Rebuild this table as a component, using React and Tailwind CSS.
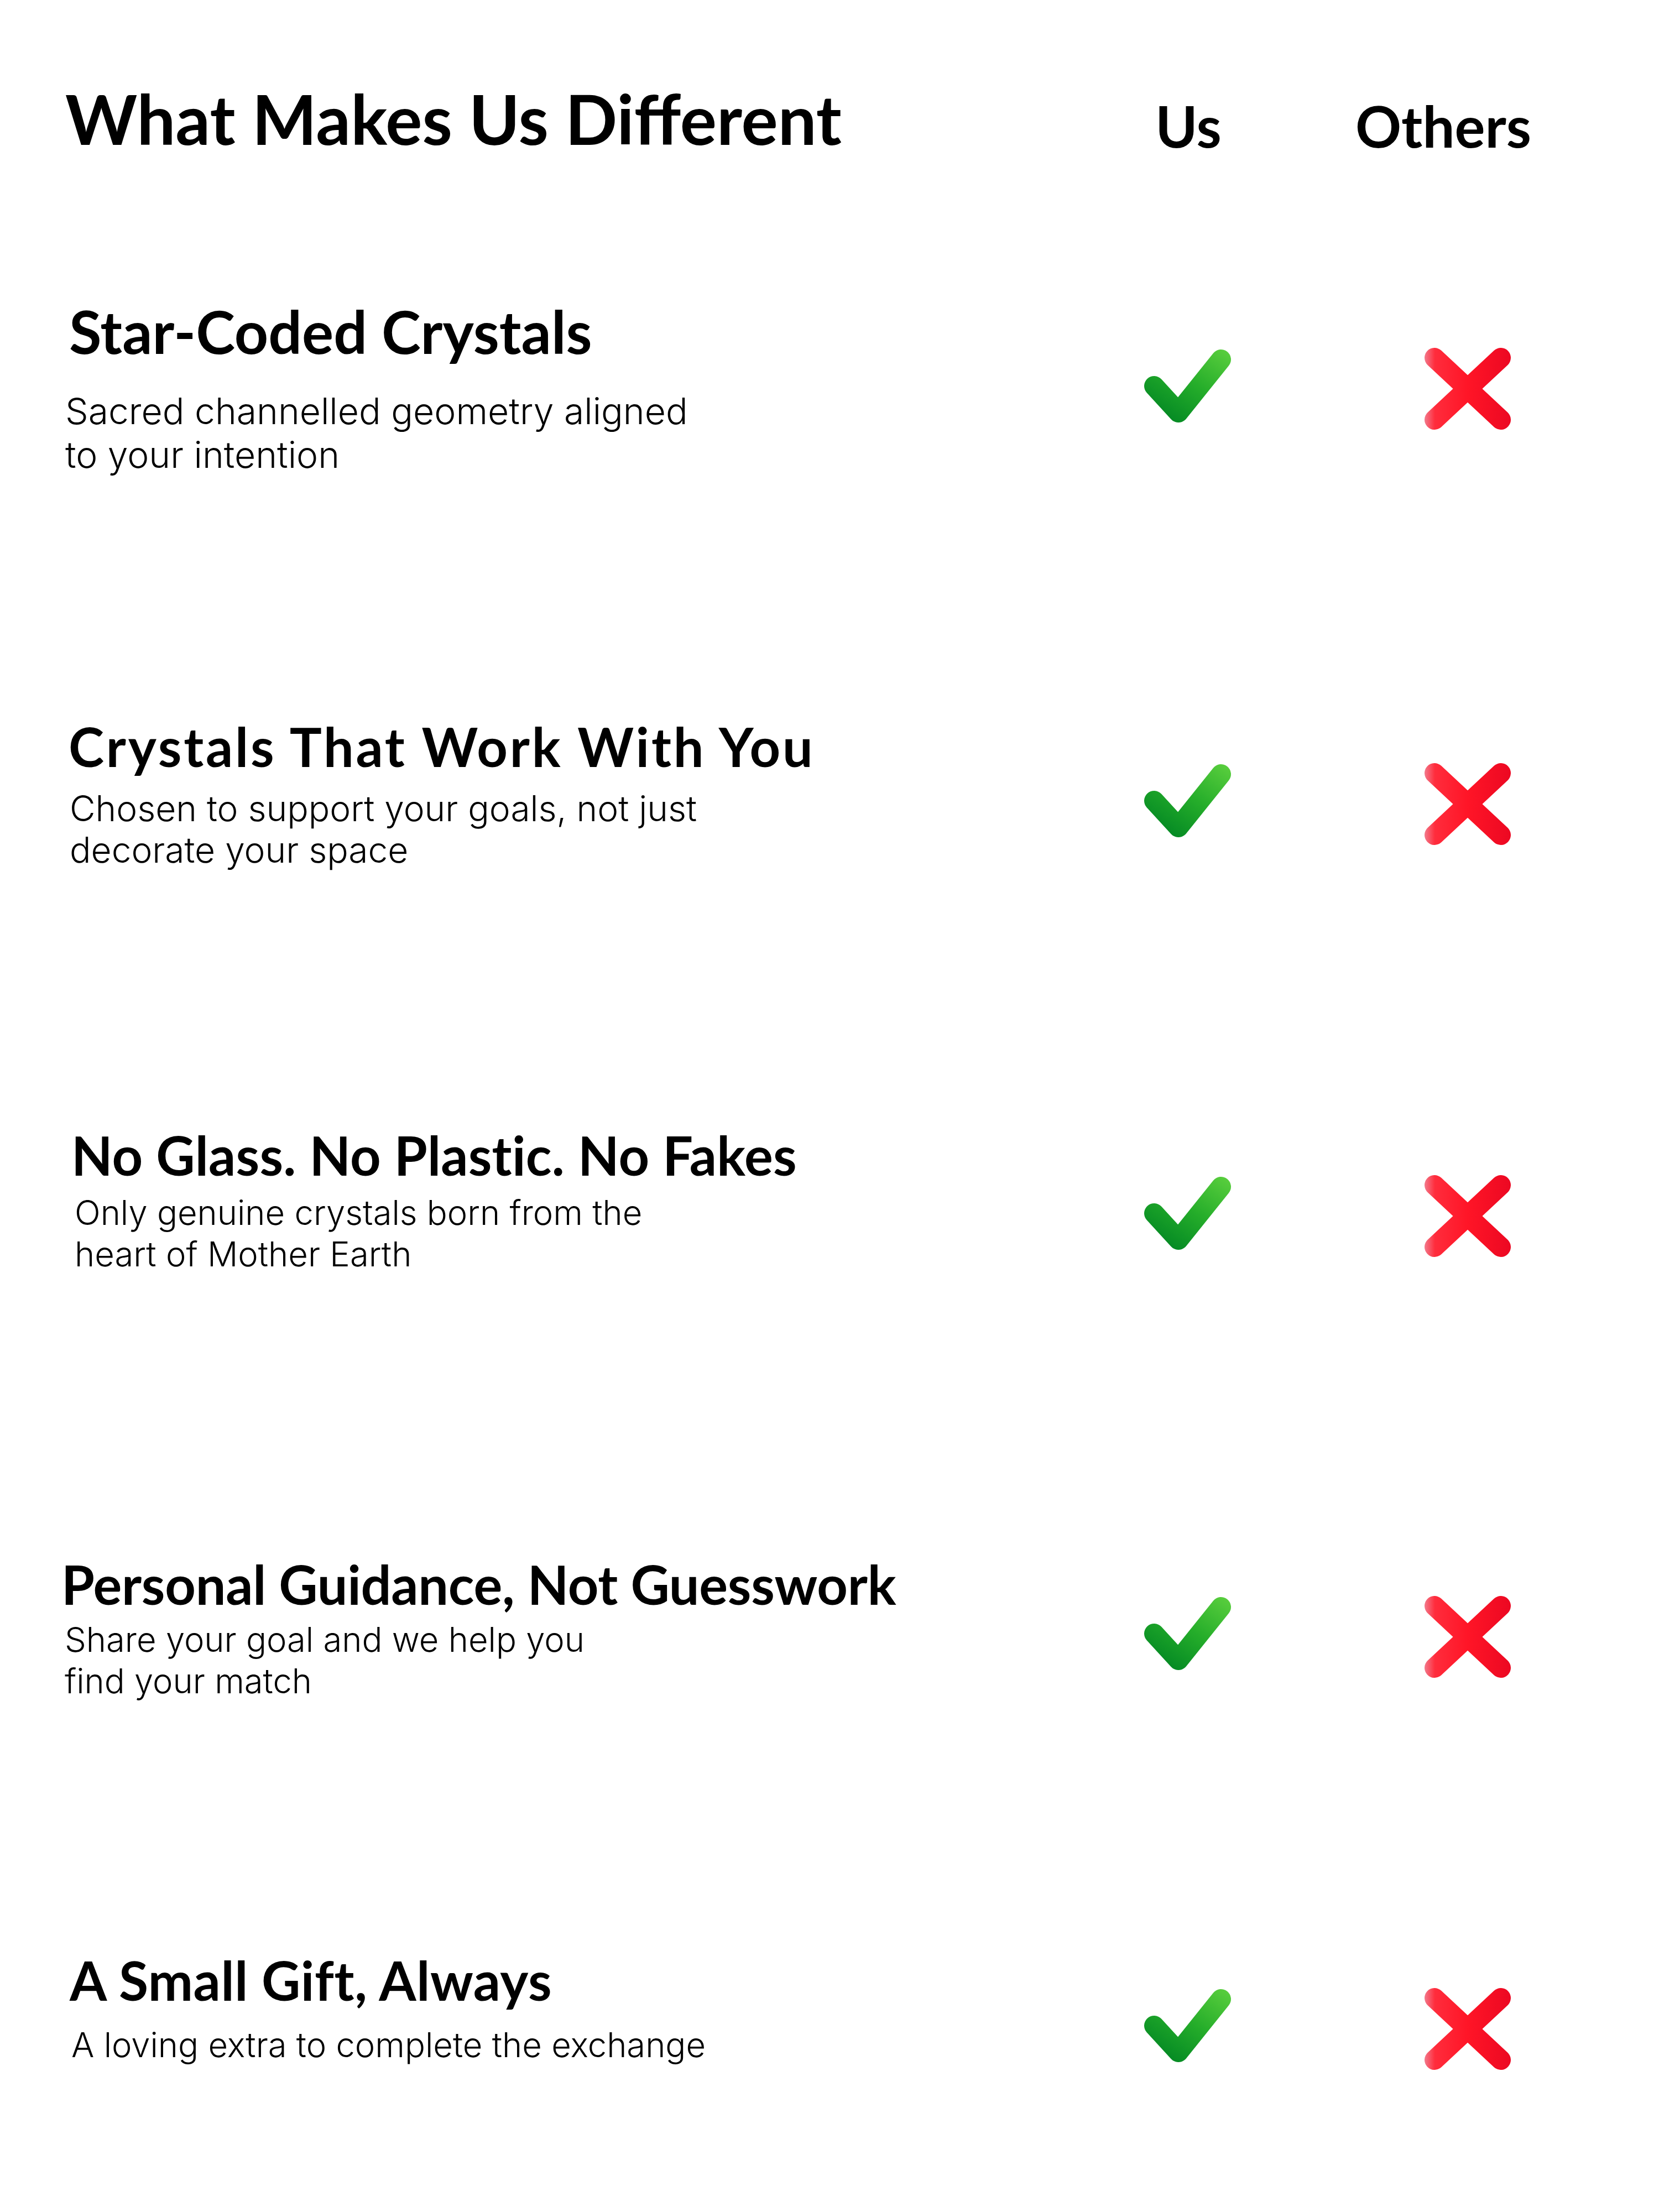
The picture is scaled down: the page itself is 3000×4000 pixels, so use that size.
import React, { useId } from "react";

function Check() {
  const id = useId();
  return (
    <svg width="160" height="137" viewBox="0 0 160 137" className="block">
      <defs>
        <linearGradient id={id} gradientUnits="userSpaceOnUse" x1="145" y1="5" x2="60" y2="137">
          <stop offset="0" stopColor="#56cc3c" />
          <stop offset="0.5" stopColor="#25ad2a" />
          <stop offset="1" stopColor="#058a24" />
        </linearGradient>
      </defs>
      <polyline
        points="20,68 64,116 141,20"
        fill="none"
        stroke={`url(#${id})`}
        strokeWidth="36"
        strokeLinecap="round"
        strokeLinejoin="round"
      />
    </svg>
  );
}

function Cross() {
  const id = useId();
  return (
    <svg width="156" height="148" viewBox="0 0 156 148" className="block">
      <defs>
        <linearGradient id={id} gradientUnits="userSpaceOnUse" x1="0" y1="0" x2="156" y2="0">
          <stop offset="0" stopColor="#f27a8c" />
          <stop offset="0.12" stopColor="#ff2c3c" />
          <stop offset="0.5" stopColor="#ff1527" />
          <stop offset="1" stopColor="#ec0822" />
        </linearGradient>
      </defs>
      <g stroke={`url(#${id})`} strokeWidth="36" strokeLinecap="round" fill="none">
        <line x1="18" y1="18" x2="138" y2="130" />
        <line x1="138" y1="18" x2="18" y2="130" />
      </g>
    </svg>
  );
}

const head = "font-['Lato',sans-serif] font-bold text-black leading-none whitespace-nowrap";
const body = "font-['Inter',sans-serif] font-light text-black whitespace-nowrap";

export default function App() {
  return (
    <div className="w-[3000px] h-[4000px] bg-white flex flex-col overflow-hidden">
      {/* Header */}
      <div className="h-[400px] flex items-start shrink-0">
        <div className="w-[2049px] pl-[118px] pt-[152px]">
          <div className={`${head} text-[124px]`}>What Makes Us Different</div>
        </div>
        <div className="w-[200px] pt-[176px] flex justify-center">
          <div className={`${head} text-[103px]`}>Us</div>
        </div>
        <div className="w-[300px] ml-[211px] pt-[176px] flex justify-center">
          <div className={`${head} text-[103px]`}>Others</div>
        </div>
      </div>

      {/* Row 1 */}
      <div className="h-[700px] flex items-start shrink-0">
        <div className="w-[2067px] flex flex-col">
          <div className={`${head} text-[107px] pl-[125px] mt-[145px]`}>Star-Coded Crystals</div>
          <div className={`${body} text-[66px] leading-[79px] pl-[118px] mt-[52px]`}>
            <div>Sacred channelled geometry aligned</div>
            <div>to your intention</div>
          </div>
        </div>
        <div className="w-[160px] mt-[230px]"><Check /></div>
        <div className="w-[156px] ml-[349px] mt-[229px]"><Cross /></div>
      </div>

      {/* Row 2 */}
      <div className="h-[750px] flex items-start shrink-0">
        <div className="w-[2067px] flex flex-col">
          <div className={`${head} text-[97px] tracking-[3.8px] pl-[124px] mt-[201px]`}>Crystals That Work With You</div>
          <div className={`${body} text-[64px] leading-[75px] pl-[126px] mt-[26px]`}>
            <div>Chosen to support your goals, not just</div>
            <div>decorate your space</div>
          </div>
        </div>
        <div className="w-[160px] mt-[280px]"><Check /></div>
        <div className="w-[156px] ml-[349px] mt-[280px]"><Cross /></div>
      </div>

      {/* Row 3 */}
      <div className="h-[750px] flex items-start shrink-0">
        <div className="w-[2067px] flex flex-col">
          <div className={`${head} text-[97px] tracking-[0.25px] pl-[129px] mt-[190px]`}>No Glass. No Plastic. No Fakes</div>
          <div className={`${body} text-[61.5px] leading-[75px] pl-[135px] mt-[18px]`}>
            <div>Only genuine crystals born from the</div>
            <div>heart of Mother Earth</div>
          </div>
        </div>
        <div className="w-[160px] mt-[276px]"><Check /></div>
        <div className="w-[156px] ml-[349px] mt-[275px]"><Cross /></div>
      </div>

      {/* Row 4 */}
      <div className="h-[800px] flex items-start shrink-0">
        <div className="w-[2067px] flex flex-col">
          <div className={`${head} text-[97px] tracking-[-0.25px] pl-[111px] mt-[216px]`}>Personal Guidance, Not Guesswork</div>
          <div className={`${body} text-[61.5px] leading-[75px] pl-[117px] mt-[14px]`}>
            <div>Share your goal and we help you</div>
            <div>find your match</div>
          </div>
        </div>
        <div className="w-[160px] mt-[286px]"><Check /></div>
        <div className="w-[156px] ml-[349px] mt-[286px]"><Cross /></div>
      </div>

      {/* Row 5 */}
      <div className="h-[600px] flex items-start shrink-0">
        <div className="w-[2067px] flex flex-col">
          <div className={`${head} text-[97px] tracking-[0.6px] pl-[126px] mt-[132px]`}>A Small Gift, Always</div>
          <div className={`${body} text-[61.5px] leading-[75px] pl-[129px] mt-[31px]`}>
            <div>A loving extra to complete the exchange</div>
          </div>
        </div>
        <div className="w-[160px] mt-[195px]"><Check /></div>
        <div className="w-[156px] ml-[349px] mt-[195px]"><Cross /></div>
      </div>
    </div>
  );
}
